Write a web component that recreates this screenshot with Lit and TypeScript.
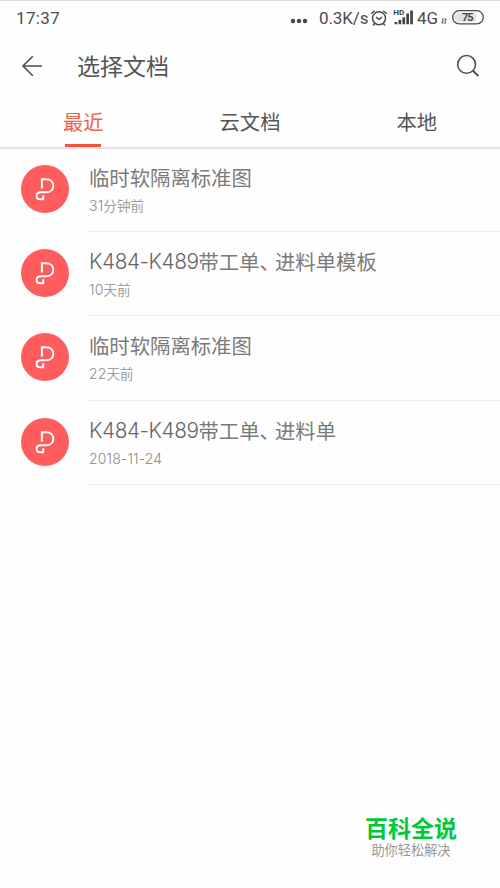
import { LitElement, html, css, svg } from "lit";
import { customElement, property, state } from "lit/decorators.js";
import { classMap } from "lit/directives/class-map.js";

interface Doc {
  latin: string;
  name: string;
  tail: string;
  dateLatin: string;
  dateText: string;
}

const DOCS: Doc[] = [
  { latin: "", name: "临时软隔离标准图", tail: "", dateLatin: "31", dateText: "分钟前" },
  { latin: "K484-K489", name: "带工单", tail: "进料单模板", dateLatin: "10", dateText: "天前" },
  { latin: "", name: "临时软隔离标准图", tail: "", dateLatin: "22", dateText: "天前" },
  { latin: "K484-K489", name: "带工单", tail: "进料单", dateLatin: "2018-11-24", dateText: "" },
];

@customElement("status-bar")
export class StatusBar extends LitElement {
  static styles = css`
    :host {
      display: flex;
      align-items: center;
      height: 35px;
      box-sizing: border-box;
      border-top: 1px solid #dcdcdc;
      padding: 0 16px;
      color: #4c4c4c;
      font: 17px/20px Roboto, "Liberation Sans", sans-serif;
    }
    .time { flex: 1; letter-spacing: 0.35px; }
    .dots { width: 18px; height: 6px; margin: 6px 11px 0 0; }
    .speed { width: 48px; white-space: nowrap; letter-spacing: -0.1px; }
    .alarm { width: 18px; height: 18px; margin-left: 3px; }
    .signal { width: 22px; height: 18px; margin-left: 5px; }
    .net { width: 23px; margin-left: 2px; white-space: nowrap; }
    .data { width: 6px; height: 6px; margin: 5px 0 0 1px; }
    .battery { width: 32px; height: 15px; margin: 0 0 1px 5px; }
    svg { display: block; overflow: visible; }
    text { font-family: Roboto, "Liberation Sans", sans-serif; font-weight: 700; fill: #444; }
  `;
  render() {
    return html`
      <span class="time">17:37</span>
      <svg class="dots" viewBox="0 0 18 6" fill="#444">
        <circle cx="3" cy="3" r="2.2" /><circle cx="9" cy="3" r="2.2" /><circle cx="15" cy="3" r="2.2" />
      </svg>
      <span class="speed">0.3K/s</span>
      <svg class="alarm" viewBox="0 0 18 18" fill="none" stroke="#4c4c4c" stroke-width="1.5">
        <circle cx="9" cy="9.3" r="6.5" />
        <path d="M1.2 4.8 4.8 1.7M16.8 4.8 13.2 1.7M6 8.2 9 10.4l3-2.2M4.6 14.6l-1.5 1.8M13.4 14.6l1.5 1.8" />
      </svg>
      <svg class="signal" viewBox="0 0 22 18">
        <text x="0.3" y="6.3" font-size="7.6" textLength="11" lengthAdjust="spacingAndGlyphs">HD</text>
        <path fill="#444" d="M1.6 13h2.7v2.2H1.6zM5.5 10.8h2.7v4.4H5.5zM9.4 8.2h2.7v7H9.4zM13.3 4.6H16v10.6h-2.7zM17.2 1.6h2.7v13.6h-2.7z" />
      </svg>
      <span class="net">4G</span>
      <svg class="data" viewBox="0 0 6 6" fill="none" stroke="#555" stroke-width="1">
        <path d="M1.8 0v5.5L.3 4M4.2 6V.5L5.7 2" />
      </svg>
      <svg class="battery" viewBox="0 0 32 15">
        <rect x=".7" y=".7" width="30.6" height="13.2" rx="6.6" fill="#fff" stroke="#4c4c4c" stroke-width="1.3" />
        <path d="M7.5 2.4H24v9.8H7.5a4.9 4.9 0 0 1 0-9.8z" fill="#e4e4e4" />
        <text x="10" y="11.3" font-size="11" textLength="11.5">75</text>
      </svg>
    `;
  }
}

@customElement("doc-row")
export class DocRow extends LitElement {
  @property({ attribute: false }) doc!: Doc;
  static styles = css`
    :host { display: flex; height: 84.2px; padding-left: 21px; box-sizing: border-box; }
    .logo { flex: none; width: 48px; height: 48px; margin: 17px 20px 0 0; }
    .body { flex: 1; box-sizing: border-box; border-bottom: 1px solid #ececec; padding-top: 14px; }
    .title, .date {
      display: flex;
      white-space: nowrap;
      font-family: "Noto Sans CJK SC", sans-serif;
      font-weight: 400;
    }
    .title { font-size: 20.35px; line-height: 30px; height: 30px; color: #7a7a7a; }
    .date { font-size: 13.6px; line-height: 20px; height: 20px; margin-top: 3px; color: #a0a0a0; }
    .latin { font-family: Inter, "Noto Sans", sans-serif; font-weight: 300; }
    .title .latin { width: 109.5px; margin-top: 1px; font-size: 20.8px; color: #666; letter-spacing: -0.45px; }
    .date .latin { margin-top: 1px; font-size: 14px; color: #8a8a8a; letter-spacing: 0.15px; }
    .comma { letter-spacing: -4.9px; }
  `;
  render() {
    const d = this.doc;
    return html`
      <svg class="logo" viewBox="0 0 48 48">
        <circle cx="24" cy="24" r="24" fill="#ff5d5d" />
        ${svg`<path fill="none" stroke="#fff" stroke-width="2" d="M20.9 23.4V14.2H25c4.8 0 7.3 3 7.3 6.5s-2.5 6.6-7.3 6.6h-5c-3 0-4.4 1.5-4.4 3.6 0 2 1.5 3.4 3.7 3.4h2.9v-4.1"/>`}
      </svg>
      <div class="body">
        <div class="title">
          ${d.latin ? html`<span class="latin">${d.latin}</span>` : ""}<span>${d.name}</span>${d.tail
            ? html`<span class="comma">、</span><span>${d.tail}</span>`
            : ""}
        </div>
        <div class="date"><span class="latin">${d.dateLatin}</span><span>${d.dateText}</span></div>
      </div>
    `;
  }
}

@customElement("app-root")
export class AppRoot extends LitElement {
  @state() private active = 0;
  private tabs = ["最近", "云文档", "本地"];

  static styles = css`
    :host {
      display: flex;
      flex-direction: column;
      height: 888px;
      background: #fefefe;
      font-family: "Noto Sans CJK SC", sans-serif;
      overflow: hidden;
    }
    .header { display: flex; align-items: center; height: 60px; padding: 0 20px 0 21px; color: #555; }
    .back { width: 22px; height: 22px; margin: 1px 34px 0 0; }
    .heading { flex: 1; font-size: 23px; font-weight: 400; line-height: 32px; }
    .search { width: 24px; height: 24px; margin-top: 1px; }
    .tabs { display: grid; grid-template-columns: repeat(3, 1fr); height: 54px; box-sizing: border-box; border-bottom: 2px solid #e4e4e4; }
    .tab { display: flex; flex-direction: column; align-items: center; font-size: 20.3px; line-height: 30px; padding-top: 11px; color: #555; font-weight: 400; }
    .tab.on { color: #f0614a; }
    .tab.on::after { content: ""; width: 36px; height: 3px; margin-top: 8px; background: #f0543a; }
    .list { flex: 1; margin-top: -1px; }
    .brand {
      align-self: flex-end;
      width: 92px;
      margin-right: 43px;
      height: 75px;
      text-align: center;
      white-space: nowrap;
      font-family: "Liberation Sans", "Noto Sans CJK SC", sans-serif;
    }
    .brand-name { font-size: 23px; line-height: 32px; font-weight: 700; color: #00c837; }
    .brand-sub { font-size: 13.2px; line-height: 12px; color: #969696; }
  `;

  render() {
    return html`
      <status-bar></status-bar>
      <header class="header">
        <svg class="back" viewBox="0 0 22 22" fill="none" stroke="#4f4f4f" stroke-width="1.6">
          <path d="M21 11H2M11.8 1.2 2 11l9.8 9.8" />
        </svg>
        <span class="heading">选择文档</span>
        <svg class="search" viewBox="0 0 24 24" fill="none" stroke="#4f4f4f" stroke-width="1.6">
          <circle cx="10.6" cy="10.4" r="8.9" /><path d="m16.6 16.6 5.8 5.4" stroke-width="2" />
        </svg>
      </header>
      <nav class="tabs">
        ${this.tabs.map(
          (t, i) => html`<div class=${classMap({ tab: true, on: i === this.active })} @click=${() => (this.active = i)}>${t}</div>`
        )}
      </nav>
      <main class="list">${DOCS.map((d) => html`<doc-row .doc=${d}></doc-row>`)}</main>
      <footer class="brand">
        <div class="brand-name">百科全说</div>
        <div class="brand-sub">助你轻松解决</div>
      </footer>
    `;
  }
}
